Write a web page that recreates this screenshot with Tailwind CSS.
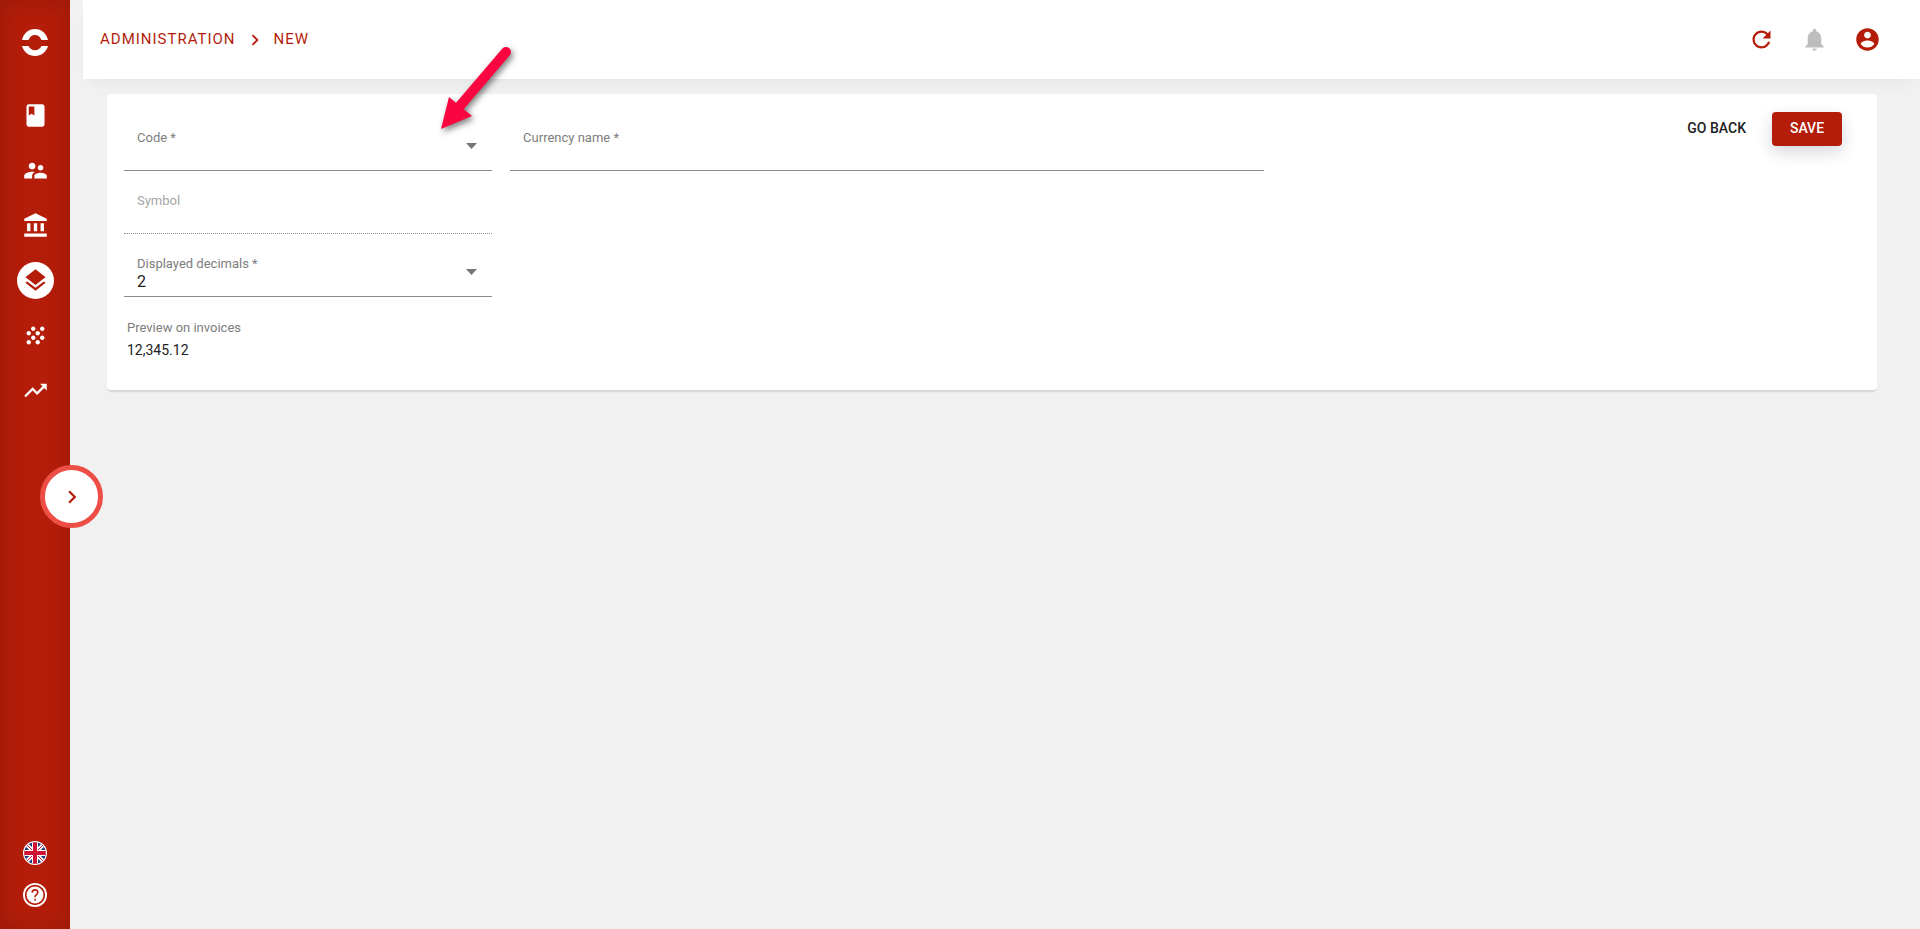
<!DOCTYPE html>
<html lang="en">
<head>
  <meta charset="UTF-8" />
  <meta name="viewport" content="width=device-width, initial-scale=1.0"/>
  <title>New currency - Administration</title>
  <script src="https://cdn.jsdelivr.net/npm/@tailwindcss/browser@4"></script>
</head>
<body class="bg-[#f1f1f1] min-h-screen flex font-[Roboto,sans-serif] text-[#212121]">

  <!-- sidebar -->
  <aside class="relative w-[70px] shrink-0 min-h-screen bg-[#b41d0a] text-white flex flex-col items-center pt-7 pb-[22px] shadow-[inset_0_0_25px_rgba(0,0,0,0.15)]">
    <a href="#" aria-label="Home" class="mb-[41px]">
      <svg class="size-7" viewBox="0 0 28 28" fill="currentColor">
        <path d="M1 12C2.400 5.500 7.500 1 14 1s11.600 4.500 13 11h-6.500C19.300 8.900 17 7 14 7s-5.300 1.900-6.500 5z"/>
        <path d="M1 18h6.500c1.200 2.600 3.500 4.200 6.500 4.200s5.300-1.600 6.500-4.200H27c-1.700 6-6.700 10-13 10S2.700 24 1 18z"/>
      </svg>
    </a>
    <nav class="flex flex-col items-center gap-[18px]">
      <a href="#" aria-label="Catalog" class="size-[37px] rounded-full flex items-center justify-center">
        <svg class="size-[27px]" viewBox="0 0 24 24" fill="currentColor"><path d="M18 2H6c-1.100 0-2 .9-2 2v16c0 1.100.9 2 2 2h12c1.100 0 2-.9 2-2V4c0-1.100-.9-2-2-2zM6 4h5v8l-2.500-1.500L6 12V4z"/></svg>
      </a>
      <a href="#" aria-label="Contacts" class="size-[37px] rounded-full flex items-center justify-center">
        <svg class="size-[27px]" viewBox="0 0 24 24" fill="currentColor"><path d="M16.500 12c1.380 0 2.490-1.120 2.490-2.500S17.880 7 16.500 7C15.120 7 14 8.120 14 9.500s1.120 2.500 2.500 2.500zM9 11c1.660 0 2.990-1.340 2.990-3S10.660 5 9 5C7.340 5 6 6.340 6 8s1.340 3 3 3zm7.500 3c-1.830 0-5.500.92-5.500 2.750V19h11v-2.250c0-1.830-3.670-2.750-5.500-2.750zM9 13c-2.330 0-7 1.170-7 3.500V19h7v-2.250c0-.85.33-2.340 2.370-3.470C10.500 13.100 9.660 13 9 13z"/></svg>
      </a>
      <a href="#" aria-label="Banks" class="size-[37px] rounded-full flex items-center justify-center">
        <svg class="size-[27px]" viewBox="0 0 24 24" fill="currentColor"><path d="M4.500 10v7h3v-7h-3zm6 0v7h3v-7h-3zM2 22h20v-3H2v3zm14.500-12v7h3v-7h-3zM12 1L2 6v2h20V6L12 1z"/></svg>
      </a>
      <a href="#" aria-label="Administration" aria-current="page" class="size-[37px] rounded-full flex items-center justify-center bg-white text-[#b41d0a]">
        <svg class="size-[27px]" viewBox="0 0 24 24" fill="currentColor"><path d="M11.990 18.540l-7.370-5.730L3 14.070l9 7 9-7-1.630-1.270-7.380 5.740zM12 16l7.360-5.730L21 9l-9-7-9 7 1.630 1.270L12 16z"/></svg>
      </a>
      <a href="#" aria-label="Modules" class="size-[37px] rounded-full flex items-center justify-center">
        <svg class="size-[27px]" viewBox="0 0 24 24" fill="currentColor"><path d="M10 12c-1.100 0-2 .9-2 2s.9 2 2 2 2-.9 2-2-.9-2-2-2zM6 8c-1.100 0-2 .9-2 2s.9 2 2 2 2-.9 2-2-.9-2-2-2zm0 8c-1.100 0-2 .9-2 2s.9 2 2 2 2-.9 2-2-.9-2-2-2zm12-8c1.100 0 2-.9 2-2s-.9-2-2-2-2 .9-2 2 .9 2 2 2zm-4 8c-1.100 0-2 .9-2 2s.9 2 2 2 2-.9 2-2-.9-2-2-2zm4-4c-1.100 0-2 .9-2 2s.9 2 2 2 2-.9 2-2-.9-2-2-2zm-4-4c-1.100 0-2 .9-2 2s.9 2 2 2 2-.9 2-2-.9-2-2-2zm-4-4c-1.100 0-2 .9-2 2s.9 2 2 2 2-.9 2-2-.9-2-2-2z"/></svg>
      </a>
      <a href="#" aria-label="Reports" class="size-[37px] rounded-full flex items-center justify-center">
        <svg class="size-[27px]" viewBox="0 0 24 24" fill="currentColor"><path d="M16 6l2.290 2.290-4.880 4.880-4-4L2 16.590 3.410 18l6-6 4 4 6.300-6.290L22 12V6z"/></svg>
      </a>
    </nav>

    <div class="mt-auto flex flex-col gap-[18px]">
      <button type="button" aria-label="Language">
        <svg class="size-6 block" viewBox="0 0 24 24">
          <defs><clipPath id="flag"><circle cx="12" cy="12" r="10.800"/></clipPath></defs>
          <circle cx="12" cy="12" r="12" fill="#fff"/>
          <g clip-path="url(#flag)">
            <path d="M0 0h24v24H0z" fill="#1f3a7d"/>
            <path d="M2 2l20 20M22 2L2 22" stroke="#fff" stroke-width="4"/>
            <path d="M2 2l20 20M22 2L2 22" stroke="#cf1134" stroke-width="1"/>
            <path d="M12 0v24M0 12h24" stroke="#fff" stroke-width="6"/>
            <path d="M12 0v24M0 12h24" stroke="#cf1134" stroke-width="4"/>
          </g>
        </svg>
      </button>
      <button type="button" aria-label="Help">
        <svg class="size-6 block" viewBox="0 0 24 24" fill="none">
          <circle cx="12" cy="12" r="12" fill="#fff"/>
          <circle cx="12" cy="12" r="9.300" stroke="#b41d0a" stroke-width="1.700"/>
          <path d="M9.200 9.800c0-1.700 1.200-2.900 2.800-2.900s2.800 1.200 2.800 2.700c0 2-2.800 2.300-2.800 4.600" stroke="#b41d0a" stroke-width="1.600"/>
          <path d="M11.200 15.800h1.700v1.700h-1.700z" fill="#b41d0a"/>
        </svg>
      </button>
    </div>

    <button type="button" aria-label="Expand menu" class="absolute z-10 left-10 top-[465px] size-[63px] rounded-full border-5 border-[#ed4f47] bg-white text-[#b41d0a] flex items-center justify-center">
      <svg class="size-[26px]" viewBox="0 0 24 24" fill="currentColor"><path d="M10 6L8.590 7.410 13.170 12l-4.580 4.590L10 18l6-6z"/></svg>
    </button>
  </aside>

  <div class="flex-1 min-w-0 pl-[13px]">
    <header class="h-[79px] bg-white pl-[17px] pr-[39px] pb-px flex justify-between items-center text-[#b41d0a] shadow-[0_8px_16px_-8px_rgba(0,0,0,0.08)]">
      <nav aria-label="Breadcrumb" class="flex items-center text-[15px] leading-5 tracking-[1px]">
        <a href="#">ADMINISTRATION</a>
        <svg class="size-[22px] mx-2 mt-0.5" viewBox="0 0 24 24" fill="currentColor"><path d="M10 6L8.590 7.410 13.170 12l-4.580 4.590L10 18l6-6z"/></svg>
        <a href="#">NEW</a>
      </nav>
      <div class="flex items-center gap-[26px]">
        <button type="button" aria-label="Refresh">
          <svg class="size-[27px] block" viewBox="0 0 24 24" fill="currentColor"><path d="M17.650 6.350C16.200 4.900 14.210 4 12 4c-4.420 0-7.990 3.580-7.990 8s3.570 8 7.990 8c3.730 0 6.840-2.550 7.730-6h-2.080c-.82 2.330-3.040 4-5.650 4-3.310 0-6-2.690-6-6s2.690-6 6-6c1.660 0 3.140.69 4.220 1.780L13 11h7V4l-2.350 2.350z"/></svg>
        </button>
        <button type="button" aria-label="Notifications" class="text-[#bdbdbd]">
          <svg class="size-[27px] block" viewBox="0 0 24 24" fill="currentColor"><path d="M12 22c1.100 0 2-.9 2-2h-4c0 1.100.89 2 2 2zm6-6v-5c0-3.070-1.640-5.640-4.500-6.320V4c0-.83-.67-1.500-1.500-1.500s-1.500.67-1.500 1.500v.68C7.630 5.360 6 7.920 6 11v5l-2 2v1h16v-1l-2-2z"/></svg>
        </button>
        <button type="button" aria-label="Account">
          <svg class="size-[27px] block" viewBox="0 0 24 24" fill="currentColor"><path d="M12 2C6.480 2 2 6.480 2 12s4.480 10 10 10 10-4.480 10-10S17.520 2 12 2zm0 3c1.660 0 3 1.340 3 3s-1.340 3-3 3-3-1.340-3-3 1.340-3 3-3zm0 14.200c-2.500 0-4.710-1.280-6-3.220.03-1.990 4-3.080 6-3.080 1.990 0 5.970 1.090 6 3.080-1.290 1.940-3.500 3.220-6 3.220z"/></svg>
        </button>
      </div>
    </header>

    <main class="pt-[15px] pl-6 pr-[43px]">
      <form class="bg-white rounded-[4px] pt-[14px] pb-[30px] pl-[17px] pr-[35px] flex justify-between items-start shadow-[0_3px_2px_-1px_rgba(0,0,0,0.12)]">
        <div class="w-2/3 pr-[5px]">
          <div class="grid grid-cols-3 gap-x-[18px]">
            <div class="relative pt-[22px] border-b border-[#8c8c8c]">
              <label for="code" class="block pl-[13px] text-[13px] leading-4 text-[#7d7d7d]">Code *</label>
              <select id="code" name="code" class="block w-full h-5 mb-1 pl-[13px] appearance-none bg-transparent text-base leading-5 outline-none">
                <option></option>
              </select>
              <svg class="absolute right-[15px] top-[35px] w-[11px] h-[6px] pointer-events-none" viewBox="0 0 11 6" fill="#757575"><path d="M0 0h11L5.500 6z"/></svg>
            </div>
            <div class="col-span-2 pt-[22px] border-b border-[#8c8c8c]">
              <label for="currencyName" class="block pl-[13px] text-[13px] leading-4 text-[#7d7d7d]">Currency name *</label>
              <input type="text" id="currencyName" name="currencyName" class="block w-full h-5 mb-1 pl-[13px] text-base leading-5 outline-none"/>
            </div>
            <div class="col-start-1 pt-[22px] border-b border-dotted border-[#8c8c8c]">
              <label for="symbol" class="block pl-[13px] text-[13px] leading-4 text-[#a6a6a6]">Symbol</label>
              <input type="text" id="symbol" name="symbol" disabled class="block w-full h-5 mb-1 pl-[13px] text-base leading-5 outline-none"/>
            </div>
            <div class="relative col-start-1 pt-[22px] border-b border-[#8c8c8c]">
              <label for="decimals" class="block pl-[13px] text-[13px] leading-4 text-[#7d7d7d]">Displayed decimals *</label>
              <select id="decimals" name="decimals" class="block w-full h-5 mb-1 pl-[13px] appearance-none bg-transparent text-base leading-5 outline-none">
                <option>0</option>
                <option>1</option>
                <option selected>2</option>
                <option>3</option>
              </select>
              <svg class="absolute right-[15px] top-[35px] w-[11px] h-[6px] pointer-events-none" viewBox="0 0 11 6" fill="#757575"><path d="M0 0h11L5.500 6z"/></svg>
            </div>
          </div>
          <div class="pl-[3px] pt-[23px]">
            <p class="text-[13px] leading-4 text-[#7d7d7d]">Preview on invoices</p>
            <p class="mt-1 text-sm leading-5">12,345.12</p>
          </div>
        </div>

        <div class="flex items-center gap-[10px] pt-1 text-sm font-medium">
          <button type="button" class="h-[34px] px-4 pb-0.5">GO BACK</button>
          <button type="submit" class="h-[34px] w-[70px] pb-0.5 rounded-[4px] bg-[#b41d0a] text-white shadow-[0_6px_16px_rgba(30,30,60,0.18)]">SAVE</button>
        </div>
      </form>
    </main>
  </div>

  <!-- pointer to the code field -->
  <svg class="absolute left-[430px] top-[40px] w-[90px] h-[100px] pointer-events-none drop-shadow-[2px_3px_3px_rgba(0,0,0,0.5)]" viewBox="0 0 90 100" fill="#fb0540">
    <path d="M76 12L29 67" stroke="#fb0540" stroke-width="10" stroke-linecap="round"/>
    <path d="M11 89L19 57 42 76z"/>
  </svg>
</body>
</html>
